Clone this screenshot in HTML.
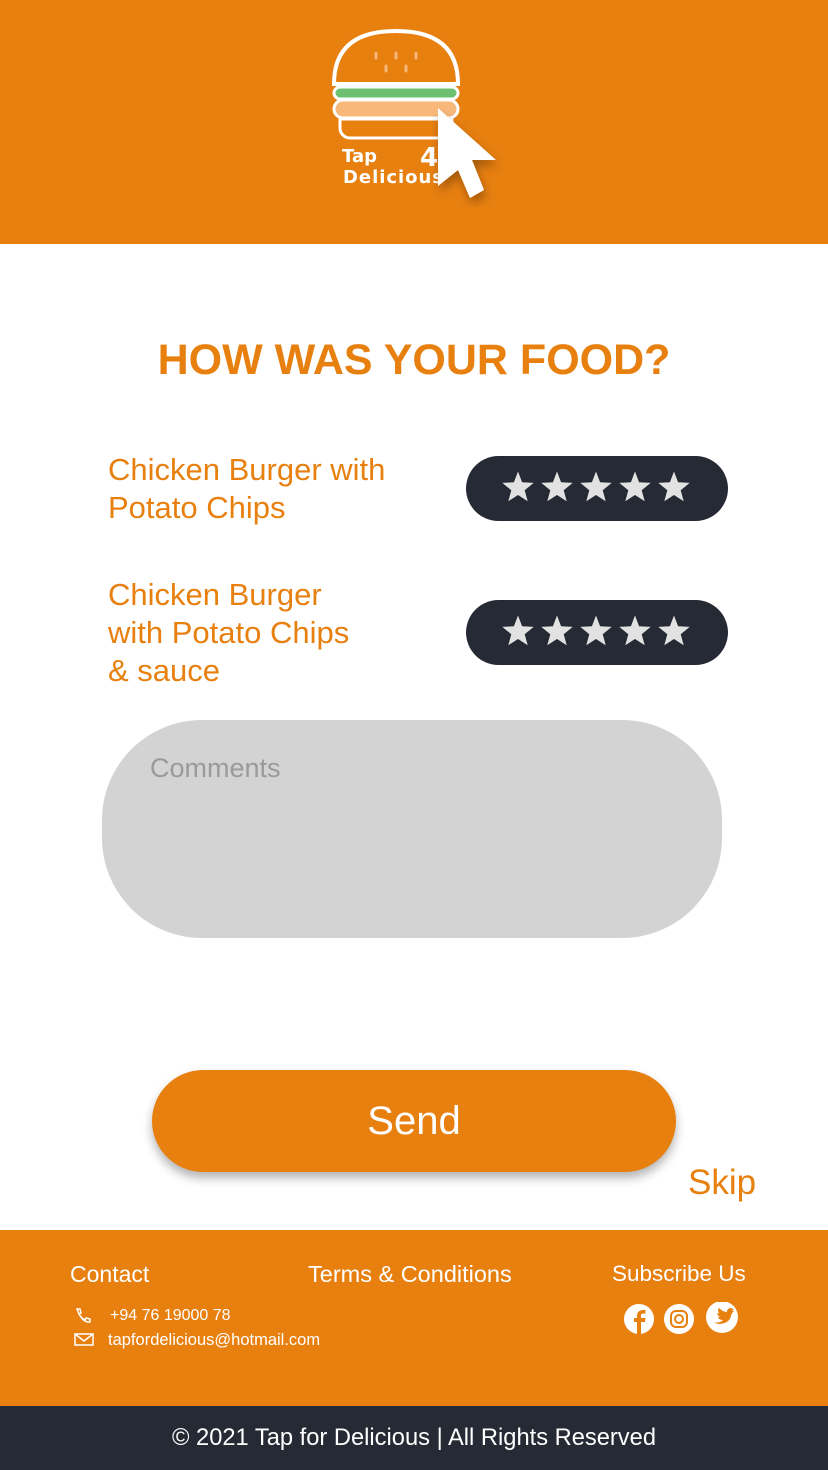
<!DOCTYPE html>
<html><head><meta charset="utf-8"><style>
*{margin:0;padding:0;box-sizing:border-box}
body{width:828px;height:1470px;position:relative;background:#fff;font-family:"Liberation Sans",Roboto,sans-serif;overflow:hidden}
.a{position:absolute}
.or{color:#E88010}
.pill{position:absolute;left:466px;width:262px;height:65px;border-radius:33px;background:#262A34}
.pill svg{position:absolute;left:0;top:0}
</style></head><body>
<div class="a" style="left:0;top:0;width:828px;height:244px;background:#E88010"></div>
<svg class="a" style="left:320px;top:20px" width="190" height="190" viewBox="0 0 190 190">
<defs><filter id="sh"><feDropShadow dx="2" dy="6" stdDeviation="5" flood-color="#000" flood-opacity=".3"/></filter></defs>
<path d="M14 64 Q14 11 76 11 Q138 11 138 64 Z" fill="none" stroke="#fff" stroke-width="4"/>
<g stroke="#F5B77A" stroke-width="3" stroke-linecap="round"><line x1="56" y1="33" x2="56" y2="38"/><line x1="76" y1="33" x2="76" y2="38"/><line x1="96" y1="33" x2="96" y2="38"/><line x1="66" y1="46" x2="66" y2="51"/><line x1="86" y1="46" x2="86" y2="51"/></g>
<rect x="14" y="67" width="124" height="12" rx="6" fill="#6CC070" stroke="#fff" stroke-width="3"/>
<rect x="14" y="80" width="124" height="18" rx="9" fill="#F8B87A" stroke="#fff" stroke-width="3"/>
<path d="M20 99 H132 V108 a10 10 0 0 1 -10 10 H30 a10 10 0 0 1 -10 -10 Z" fill="none" stroke="#fff" stroke-width="3"/>
<text x="22" y="142" fill="#fff" font-family="DejaVu Sans" font-weight="bold" font-size="18">Tap</text>
<text x="23" y="163" fill="#fff" font-family="DejaVu Sans" font-weight="bold" font-size="18" textLength="100">Delicious</text>
<text x="100" y="146" fill="#fff" font-family="DejaVu Sans" font-weight="bold" font-size="26">4</text>
<path d="M118 88 L176 140 L152 140 L164 170 L150 178 L138 150 L118 166 Z" fill="#fff" filter="url(#sh)"/>
</svg>
<div class="a or" style="left:0;width:828px;top:336px;text-align:center;font-size:43px;font-weight:bold">HOW WAS YOUR FOOD?</div>
<div class="a or" style="left:108px;top:451px;font-size:31px;line-height:38px">Chicken Burger with<br>Potato Chips</div>
<div class="a or" style="left:108px;top:576px;font-size:31px;line-height:38px">Chicken Burger<br>with Potato Chips<br>&amp; sauce</div>
<div class="pill" style="top:456px"><svg width="262" height="65"></svg></div>
<div class="pill" style="top:600px"><svg width="262" height="65"></svg></div>
<div class="a" style="left:102px;top:720px;width:620px;height:218px;border-radius:100px;background:#D3D3D3"></div>
<div class="a" style="left:150px;top:753px;font-size:27px;color:#9a9a9a">Comments</div>
<div class="a" style="left:152px;top:1070px;width:524px;height:102px;border-radius:51px;background:#E88010;box-shadow:0 6px 10px rgba(0,0,0,.3);color:#fff;font-size:40px;text-align:center;line-height:102px">Send</div>
<div class="a or" style="left:688px;top:1163px;font-size:35px">Skip</div>
<div class="a" style="left:0;top:1230px;width:828px;height:176px;background:#E88010"></div>
<div class="a" style="left:70px;top:1261px;color:#fff;font-size:23px">Contact</div>
<div class="a" style="left:308px;top:1261px;color:#fff;font-size:23.5px">Terms &amp; Conditions</div>
<div class="a" style="left:612px;top:1261px;color:#fff;font-size:22.5px">Subscribe Us</div>
<svg class="a" style="left:74px;top:1307px" width="20" height="18" viewBox="0 0 20 18"><path d="M3 2 L6 2 L7 6 L5 7 Q7 11 11 13 L12 11 L16 12 L16 15 Q8 16 3 2Z" fill="none" stroke="#fff" stroke-width="1.5"/></svg>
<div class="a" style="left:110px;top:1307px;color:#fff;font-size:16px">+94 76 19000 78</div>
<svg class="a" style="left:74px;top:1333px" width="20" height="14"><rect x="1" y="1" width="18" height="11" fill="none" stroke="#fff" stroke-width="1.5"/><path d="M1 1 L10 8 L19 1" fill="none" stroke="#fff" stroke-width="1.5"/></svg>
<div class="a" style="left:108px;top:1331px;color:#fff;font-size:16.5px">tapfordelicious@hotmail.com</div>
<svg class="a" style="left:622px;top:1302px" width="120" height="34">
<circle cx="17" cy="17" r="15" fill="#fff"/><path d="M19 32 V20 H23 L23.5 16 H19 V13.5 Q19 11.5 21 11.5 H23.5 V8 Q16 7 15 13 V16 H12 V20 H15 V32Z" fill="#E88010"/>
<circle cx="57" cy="17" r="15" fill="#fff"/><rect x="49" y="9" width="16" height="16" rx="5" fill="none" stroke="#E88010" stroke-width="2"/><circle cx="57" cy="17" r="4" fill="none" stroke="#E88010" stroke-width="2"/>
<circle cx="100" cy="15" r="16" fill="#fff"/><path d="M91 20 Q97 22 101 18 Q97 18 96 15 Q98 15 98 15 Q95 13 95 11 Q96 12 97 11 Q95 8 97 6 Q101 10 105 10 Q105 6 109 6 Q111 7 112 7 L110 9 L112 9 Q109 12 109 14 Q107 22 96 22 Z" fill="#E88010"/>
</svg>
<div class="a" style="left:0;top:1406px;width:828px;height:64px;background:#262A34;color:#fff;font-size:23.7px;text-align:center;line-height:64px">© 2021 Tap for Delicious | All Rights Reserved</div>
<script>
var p="";for(var i=0;i<5;i++){var cx=52+i*39,cy=32,s="";for(var k=0;k<10;k++){var r=k%2?7:16.5,a=-Math.PI/2+k*Math.PI/5;s+=(cx+r*Math.cos(a)).toFixed(1)+","+(cy+r*Math.sin(a)).toFixed(1)+" ";}p+='<polygon points="'+s+'" fill="#E2E2E2"/>';}
document.querySelectorAll('.pill svg').forEach(function(e){e.innerHTML=p;});
</script>
</body></html>
